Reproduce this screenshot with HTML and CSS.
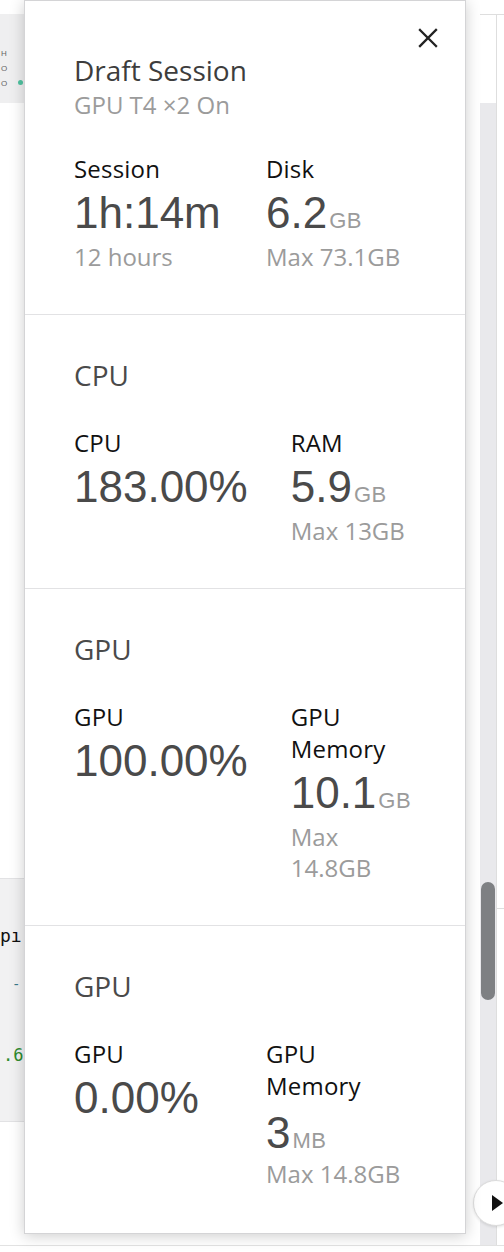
FILE: index.html
```html
<!DOCTYPE html>
<html lang="en">
<head>
<meta charset="utf-8">
<title>Draft Session</title>
<link rel="stylesheet" href="styles.css">
</head>
<body>
<div class="app">
  <aside class="left-strip">
    <div class="left-head">
      <span class="tiny">H</span>
      <span class="tiny">O</span>
      <span class="tiny">O</span>
      <span class="dot"></span>
    </div>
    <div class="left-cell">
      <span class="code-a">pı</span>
      <span class="code-b">-</span>
      <span class="code-c">.6</span>
    </div>
  </aside>
  <main class="middle"></main>
  <div class="right-col">
    <div class="track"><div class="thumb"></div></div>
    <div class="edge"><div class="edge-line"></div></div>
  </div>
</div>

<button class="run-btn" aria-label="Run">
  <svg width="14" height="20" viewBox="0 0 14 20"><path d="M2 2 L13 10 L2 18 Z" fill="#111"/></svg>
</button>

<div class="popover">
  <button class="close" aria-label="Close">
    <svg width="20" height="20" viewBox="0 0 20 20"><path d="M2 2 L18 18 M18 2 L2 18" stroke="#222" stroke-width="2.3" stroke-linecap="square"/></svg>
  </button>

  <section class="panel panel-head">
    <h1 class="title">Draft Session</h1>
    <p class="subtitle">GPU T4 ×2 On</p>
    <div class="stats">
      <div class="stat stat-first">
        <div class="label">Session</div>
        <div class="value">1h:14m</div>
        <div class="sub">12 hours</div>
      </div>
      <div class="stat">
        <div class="label">Disk</div>
        <div class="value">6.2<span class="unit">GB</span></div>
        <div class="sub">Max 73.1GB</div>
      </div>
    </div>
  </section>

  <section class="panel">
    <h2 class="section-title">CPU</h2>
    <div class="stats">
      <div class="stat stat-first">
        <div class="label">CPU</div>
        <div class="value">183.00%</div>
      </div>
      <div class="stat">
        <div class="label">RAM</div>
        <div class="value">5.9<span class="unit">GB</span></div>
        <div class="sub">Max 13GB</div>
      </div>
    </div>
  </section>

  <section class="panel">
    <h2 class="section-title">GPU</h2>
    <div class="stats">
      <div class="stat stat-first">
        <div class="label">GPU</div>
        <div class="value">100.00%</div>
      </div>
      <div class="stat">
        <div class="label">GPU Memory</div>
        <div class="value">10.1<span class="unit">GB</span></div>
        <div class="sub">Max 14.8GB</div>
      </div>
    </div>
  </section>

  <section class="panel panel-last">
    <h2 class="section-title">GPU</h2>
    <div class="stats">
      <div class="stat stat-first">
        <div class="label">GPU</div>
        <div class="value">0.00%</div>
      </div>
      <div class="stat">
        <div class="label">GPU Memory</div>
        <div class="value value-low">3<span class="unit">MB</span></div>
        <div class="sub">Max 14.8GB</div>
      </div>
    </div>
  </section>
</div>
</body>
</html>
```
FILE: styles.css
```css
* { box-sizing: border-box; }
html, body {
  margin: 0;
  padding: 0;
  background: #ffffff;
  font-family: "Open Sans", "Liberation Sans", Arial, sans-serif;
}
body {
  width: 504px;
  height: 1252px;
  overflow: hidden;
  position: relative;
}

/* background app */
.app {
  display: flex;
  height: 1246px;
  border-bottom: 1px solid #e2e2e2;
}
.left-strip {
  width: 24px;
  flex-shrink: 0;
  display: flex;
  flex-direction: column;
}
.left-head {
  margin-top: 14px;
  height: 89px;
  background: #efeff0;
  display: flex;
  flex-direction: column;
  padding-top: 32px;
  padding-left: 1px;
  overflow: hidden;
  position: relative;
}
.tiny {
  font-family: "Liberation Sans", Arial, sans-serif;
  font-size: 8px;
  line-height: 15px;
  color: #666;
}
.dot {
  position: absolute;
  right: 1px;
  top: 66px;
  width: 5px;
  height: 5px;
  border-radius: 50%;
  background: #4fc3a1;
}
.left-cell {
  margin-top: 775px;
  height: 244px;
  background: #f1f1f2;
  border-top: 1px solid #e2e2e4;
  border-bottom: 1px solid #e2e2e4;
  display: flex;
  flex-direction: column;
  overflow: hidden;
  font-family: "DejaVu Sans Mono", monospace;
  font-size: 17px;
  white-space: nowrap;
}
.code-a { margin-top: 46px; color: #111; margin-left: 0; font-size: 18px; }
.code-b { margin-top: 30px; color: #3a7a8a; margin-left: 12px; font-size: 14px; }
.code-c { margin-top: 53px; color: #2e8b2e; margin-left: 3px; }
.middle { flex: 1; }
.right-col {
  width: 24px;
  flex-shrink: 0;
  margin-top: 14px;
  border-top: 1px solid #dedede;
  display: flex;
}
.track {
  width: 16px;
  flex-shrink: 0;
  margin-top: 88px;
  background: #e9e9ec;
  padding-top: 779px;
}
.thumb {
  height: 118px;
  margin: 0 1px;
  border-radius: 8px;
  background: #7e8083;
}
.edge {
  width: 8px;
  flex-shrink: 0;
  border-left: 1px solid #dedede;
}
.edge-line {
  margin-top: 893px;
  border-top: 1px solid #dedede;
}

.run-btn {
  position: absolute;
  left: 473px;
  top: 1180px;
  width: 46px;
  height: 46px;
  border-radius: 50%;
  background: #fff;
  border: 1px solid #dcdcdc;
  box-shadow: 0 1px 3px rgba(0,0,0,0.12);
  padding: 0 0 0 16px;
  display: flex;
  align-items: center;
}

/* popover */
.popover {
  position: absolute;
  left: 24px;
  top: 0;
  width: 442px;
  background: #fff;
  border: 1px solid #d4d4d6;
  box-shadow: 0 2px 14px rgba(0,0,0,0.2);
}
.close {
  position: absolute;
  top: 27px;
  right: 27px;
  width: 20px;
  height: 20px;
  padding: 0;
  border: 0;
  background: transparent;
  display: block;
}
.close svg { display: block; }

.panel {
  padding: 44px 57px 42px 49px;
  border-top: 1px solid #e2e2e4;
}
.panel-head {
  border-top: 0;
  padding-top: 52px;
}
.panel-last {
  padding-bottom: 44px;
}
.title {
  margin: 0;
  font-size: 28px;
  line-height: 34px;
  font-weight: 400;
  color: #3d3d3d;
}
.subtitle {
  margin: 0 0 31px;
  font-size: 24px;
  line-height: 35px;
  color: #9b9b9b;
}
.section-title {
  margin: 0 0 36px;
  font-size: 28px;
  line-height: 32px;
  font-weight: 400;
  color: #4a4a4a;
}
.stats {
  display: flex;
  align-items: flex-start;
}
.stat {
  flex: 1 1 auto;
  min-width: 0;
}
.stat-first {
  flex: 0 0 auto;
  min-width: 149px;
  margin-right: 43px;
}
.label {
  font-size: 24px;
  line-height: 32px;
  color: #111;
  letter-spacing: 0.2px;
}
.value {
  font-family: "Liberation Sans", Arial, sans-serif;
  font-size: 44px;
  line-height: 56px;
  color: #4a4a4a;
  white-space: nowrap;
}
.value-low {
  padding-top: 3px;
  margin-bottom: -3px;
}
.unit {
  font-size: 22px;
  line-height: 1;
  color: #9b9b9b;
  margin-left: 2px;
  letter-spacing: 0.5px;
}
.sub {
  font-size: 24px;
  line-height: 31px;
  color: #9b9b9b;
}
```
